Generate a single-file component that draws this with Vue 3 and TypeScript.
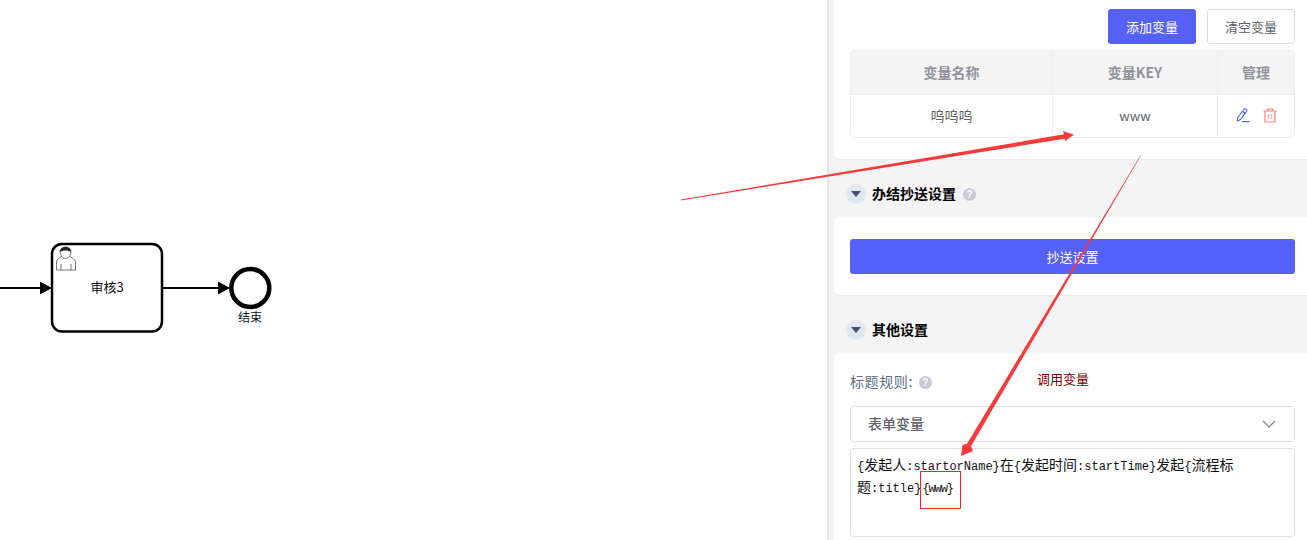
<script setup lang="ts">
import { ref } from 'vue'

interface Segment {
  text: string;
  kind?: 'cjk' | 'tight';
}

const line1 = ref<Segment[]>([
  { text: '{' },
  { text: '发起人', kind: 'cjk' },
  { text: ':startorName}' },
  { text: '在', kind: 'cjk' },
  { text: '{' },
  { text: '发起时间', kind: 'cjk' },
  { text: ':startTime}' },
  { text: '发起', kind: 'cjk' },
  { text: '{' },
  { text: '流程标', kind: 'cjk' }
])

const line2 = ref<Segment[]>([
  { text: '题', kind: 'cjk' },
  { text: ':title}' },
  { text: '{www}', kind: 'tight' }
])
</script>

<template>
  <div class="page">
    <div class="canvas">
      <svg class="diagram" width="827" height="540" viewBox="0 0 827 540">
        <path d="M0 288H42" class="flow" />
        <path d="M40 281.500L52 288L40 294.500Z" fill="#000" />
        <rect x="52" y="244" width="110" height="87.500" rx="10" fill="#fff" stroke="#000" stroke-width="2.500" />
        <g fill="#fff" stroke="#555" stroke-width="0.8">
          <path d="M56.500 270V262C56.500 259 60 257.500 62 256.500C60.500 255 60 253 60 251.500C60.500 248.500 63 247 65.500 247C68.500 247 71 248.500 71 251.500C71 253.500 70.500 255 69.500 256.500C71.500 257.500 75.500 259 75.500 262V270Z" />
          <path d="M61 270V264M71 270V264M62 256.500C63 259 68 259 69.500 256.500" fill="none" />
        </g>
        <path d="M60 252C60 248 63 247 65.500 247C68.500 247 71 248.500 71 252C68 250 63 250 60 252Z" fill="#222" />
        <text x="107" y="292" class="diagram-text" font-size="13">审核3</text>
        <path d="M162 288H220" class="flow" />
        <path d="M218 281.500L230 288L218 294.500Z" fill="#000" />
        <circle cx="250.300" cy="288" r="19" fill="#fff" stroke="#000" stroke-width="4.500" />
        <text x="250" y="322" class="diagram-text" font-size="12">结束</text>
      </svg>
    </div>

    <aside class="panel">
      <section class="card first">
        <div class="actions">
          <button class="btn primary">添加变量</button>
          <button class="btn plain">清空变量</button>
        </div>
        <div class="table">
          <div class="cell head">变量名称</div>
          <div class="cell head">变量KEY</div>
          <div class="cell head">管理</div>
          <div class="cell">呜呜呜</div>
          <div class="cell key">www</div>
          <div class="cell tools">
            <svg width="14" height="15" viewBox="0 0 14 15" fill="none" stroke="#5661f9" stroke-width="1.100">
              <path d="M1.500 13L1.800 9.500L7.800 1.500C8.400 0.800 9.200 0.800 10 1.300C10.800 1.900 11 2.700 10.500 3.400L4.500 11.500Z" />
              <path d="M6.500 3.300L9.300 5.300M6 13.600H13.500" />
            </svg>
            <svg width="14" height="15" viewBox="0 0 14 15" fill="none" stroke="#fb7f7f" stroke-width="1.200">
              <path d="M0.500 3H13.500M4.500 3V1H9.500V3M2 3V14H12V3" />
              <path d="M5.500 6V11M8.500 6V11" stroke-width="1.500" stroke="#fbb1b1" />
            </svg>
          </div>
        </div>
      </section>

      <header class="section-head">
        <span class="fold"><i></i></span>
        <h3>办结抄送设置</h3>
        <span class="help">?</span>
      </header>
      <section class="card">
        <button class="btn primary wide">抄送设置</button>
      </section>

      <header class="section-head">
        <span class="fold"><i></i></span>
        <h3>其他设置</h3>
      </header>
      <section class="card last">
        <div class="rule-label">
          <label>标题规则:</label>
          <span class="help">?</span>
        </div>
        <div class="select">
          <span>表单变量</span>
          <svg width="14" height="8" viewBox="0 0 14 8" fill="none" stroke="#7b7e87" stroke-width="1.100">
            <path d="M1 1L7 7L13 1" />
          </svg>
        </div>
        <div class="rule-text">
          <div class="rule-line">
            <span v-for="(seg, i) in line1" :key="i" :class="seg.kind">{{ seg.text }}</span>
          </div>
          <div class="rule-line">
            <span v-for="(seg, i) in line2" :key="i" :class="seg.kind">{{ seg.text }}</span>
          </div>
        </div>
      </section>
    </aside>

    <!-- hand drawn notes on top of the screenshot -->
    <svg class="notes" width="1307" height="540" viewBox="0 0 1307 540">
      <path d="M681 199.600L1064 134.300L1063 131L1074 134.800L1065 141L1064.500 138.700L681 200.400Z" fill="#f83a3a" />
      <path d="M1141.200 155L971 446.200L973 451L961 456L962.500 445L967 443.800L1140.800 154.800Z" fill="#f83a3a" />
      <rect x="920.500" y="471.500" width="40" height="37" fill="none" stroke="#f22" stroke-width="1" />
    </svg>
    <span class="note-text">调用变量</span>
  </div>
</template>

<style scoped>
.page {
  position: relative;
  display: flex;
  width: 1307px;
  height: 540px;
  overflow: hidden;
  background: #fff;
  font-family: "Noto Sans CJK SC", "Noto Sans", sans-serif;
  font-size: 14px;
}

.canvas {
  position: relative;
  width: 827px;
  flex: none;
}

.diagram {
  display: block;
}

.flow {
  fill: none;
  stroke: #000;
  stroke-width: 2;
}

.diagram-text {
  font-family: "Noto Sans CJK SC", "Liberation Sans", sans-serif;
  text-anchor: middle;
  fill: #111;
}

.panel {
  flex: 1;
  min-width: 0;
  padding-left: 5px;
  background: #f4f4f5;
  border-left: 2px solid #e4e4e6;
}

.card {
  padding: 22px 12px 21px 16px;
  background: #fff;
  border-bottom: 1px solid #e9ebf2;
  border-radius: 6px 0 0 6px;
}

.first {
  padding-top: 9px;
  border-radius: 0 0 0 6px;
}

.last {
  padding-top: 19px;
}

.actions {
  display: flex;
  justify-content: flex-end;
  gap: 11px;
  margin-bottom: 6px;
}

.btn {
  height: 35px;
  width: 88px;
  padding: 0;
  border-radius: 3px;
  font-family: inherit;
  font-size: 13px;
  cursor: pointer;
}

.primary {
  border: none;
  background: #5661f9;
  color: #fff;
}

.plain {
  border: 1px solid #dcdfe6;
  background: #fff;
  color: #606266;
}

.wide {
  display: block;
  width: 100%;
}

.table {
  display: grid;
  grid-template-columns: 202px 165px 1fr;
  grid-template-rows: 44px 42px;
  border: 1px solid #ebeef5;
  border-radius: 4px;
  overflow: hidden;
}

.cell {
  display: flex;
  align-items: center;
  justify-content: center;
  padding-bottom: 2px;
  box-sizing: border-box;
  border-right: 1px solid #ebeef5;
  color: #606266;
}

.cell:nth-child(3n) {
  border-right: none;
}

.key {
  font-size: 13px;
}

.head {
  background: #f4f4f5;
  border-bottom: 1px solid #ebeef5;
  color: #909399;
  font-weight: 700;
}

.tools {
  gap: 13px;
}

.section-head {
  display: flex;
  align-items: center;
  height: 57px;
  padding: 24px 0 13px 12px;
  box-sizing: border-box;
}

.section-head h3 {
  margin: -2px 7px 0 6px;
  color: #000;
  font-size: 14px;
  font-weight: 700;
}

.fold {
  display: flex;
  align-items: center;
  justify-content: center;
  width: 20px;
  height: 20px;
  border-radius: 50%;
  background: #e2e7ef;
}

.fold i {
  border-style: solid;
  border-width: 6px 5px 0;
  border-color: #46526b transparent transparent;
}

.help {
  display: inline-flex;
  align-items: center;
  justify-content: center;
  width: 13px;
  height: 13px;
  border-radius: 50%;
  background: #c8c9d3;
  color: #fff;
  font-family: "Liberation Sans", sans-serif;
  font-size: 10px;
  font-weight: 700;
}

.rule-label {
  display: flex;
  align-items: center;
  gap: 6px;
  height: 20px;
  margin-bottom: 14px;
  color: #606f80;
  font-size: 14px;
}

.rule-label label {
  letter-spacing: 0.6px;
  margin-top: -3px;
}

.select {
  display: flex;
  align-items: center;
  justify-content: space-between;
  height: 36px;
  padding: 0 18px 3px 17px;
  border: 1px solid #dcdfe6;
  border-radius: 3px;
  color: #606266;
  font-weight: 500;
}

.select svg {
  margin-top: 3px;
}

.rule-text {
  height: 89px;
  margin-top: 6px;
  padding: 5px 6px;
  box-sizing: border-box;
  border: 1px solid #dcdfe6;
  border-radius: 4px;
  color: #111;
  font-family: "Liberation Mono", "Noto Sans CJK SC", monospace;
  font-size: 12px;
}

.rule-line {
  height: 22px;
  line-height: 20px;
  white-space: nowrap;
  overflow: visible;
}

.cjk {
  font-family: "Noto Sans CJK SC", sans-serif;
  font-size: 14px;
  line-height: 20px;
}

.tight {
  margin-left: 1px;
  letter-spacing: -1.100px;
}

.notes {
  position: absolute;
  top: 0;
  left: 0;
  pointer-events: none;
}

.note-text {
  position: absolute;
  left: 1037px;
  top: 370px;
  color: #6f0000;
  font-size: 13px;
  line-height: 18px;
}

.panel,
.card,
.select {
  box-sizing: border-box;
}
</style>

<style>
html,
body {
  margin: 0;
  overflow: hidden;
}
</style>
